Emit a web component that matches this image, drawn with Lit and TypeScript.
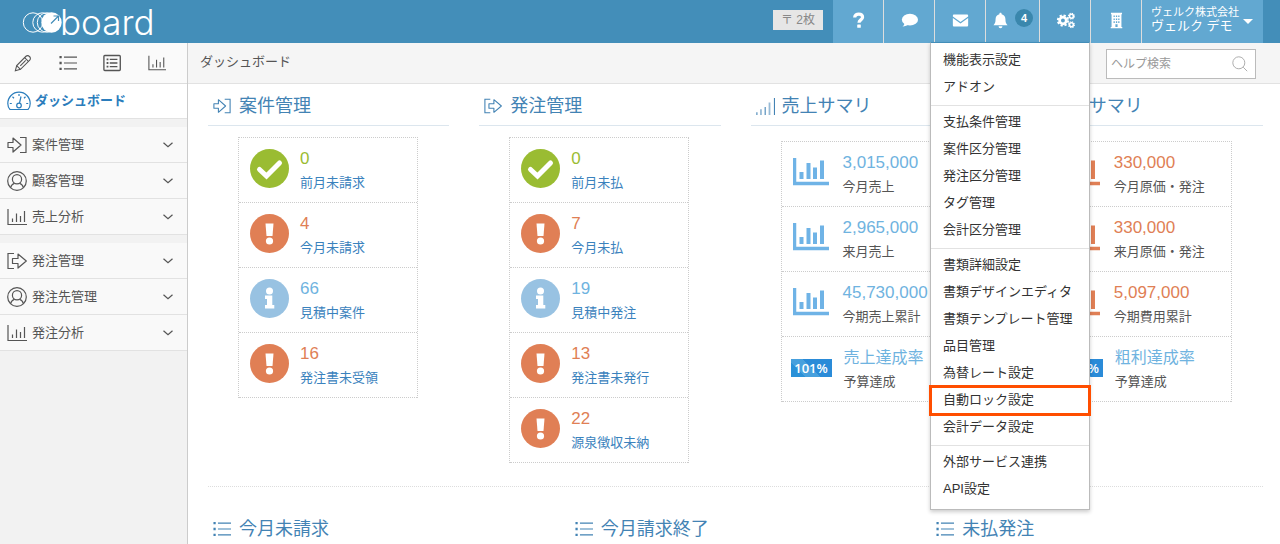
import { LitElement, html, css, svg, nothing } from "lit";
import { customElement, property } from "lit/decorators.js";
import { classMap } from "lit/directives/class-map.js";

const bars = svg`<path d="M1 2V17.5H20" /><path d="M5.5 11.500V15M9.500 6.500V15M13.500 9V15M17.500 4V15" />`;
const person = svg`<circle cx="10" cy="10" r="9.300" /><circle cx="10" cy="8.200" r="4.600" /><path d="M3.600 16.700C4 14.200 5.500 13 7.500 12.200M16.400 16.700C16 14.200 14.500 13 12.500 12.200" />`;

const lineIcons: Record<string, unknown> = {
  pencil: svg`<path d="M1.500 18.500L3 12.800L13.300 2.500C14.300 1.500 16 1.500 17.200 2.800C18.500 4 18.500 5.700 17.500 6.700L7.200 17Z" /><path d="M3 12.800L7.200 17M11.800 4L16 8.200" /><path d="M7 13.200L13 7.200" />`,
  list: svg`<path d="M5.500 3.500H20M5.500 10H20M5.500 16.500H20" /><path d="M0.500 3.500H3M0.500 10H3M0.500 16.500H3" stroke-width="2.600" />`,
  card: svg`<rect x="1" y="1.700" width="18.200" height="16.600" rx="1" stroke-width="1.500" /><path d="M7.500 6H16M7.500 10H16M7.500 14H16" stroke-width="1.500" /><path d="M4 6H6M4 10H6M4 14H6" stroke-width="2" />`,
  bars,
  person,
  enter: svg`<path d="M1 7.500H6V3L14 10L6 17V12.500H1Z" stroke-linejoin="round" /><path d="M13 2.500H19V17.500H13" />`,
  exit: svg`<path d="M5.500 7.500H11V3L19.300 10L11 17V12.500H5.500Z" stroke-linejoin="round" /><path d="M7 2.500H1V17.500H7" />`,
  rising: svg`<path d="M1 17V20M10.200 11V20M20.500 1V20" /><path d="M5.500 13.500V20M15 6V20" opacity="0.550" stroke-width="2" />`,
  down: svg`<path d="M1 5.500L10 13.500L19 5.500" stroke-width="2.400" />`,
  search: svg`<circle cx="8.500" cy="8.500" r="7.500" /><path d="M14 14L19 19" />`,
};

const solidIcons: Record<string, unknown> = {
  help: svg`<path d="M5.500 6.500C5.500 3.500 7.800 2.600 10.200 2.600C12.800 2.600 14.800 4 14.800 6.200C14.800 9.200 10.600 9.400 10.600 12.500" fill="none" stroke="currentColor" stroke-width="3.800" /><rect x="8.500" y="14.600" width="4.200" height="4" rx="0.600" />`,
  comment: svg`<ellipse cx="10.500" cy="9" rx="9.500" ry="7" /><path d="M4 12.500C4 15 3 16.300 1.600 17.200C5 17.200 7.500 16 8.500 14.500Z" />`,
  mail: svg`<path d="M1 4.500C1 3.500 1.600 3 2.500 3H17.500C18.400 3 19 3.500 19 4.500V5.300L10 11.800L1 5.300Z" /><path d="M1 7.200L10 13.600L19 7.200V15.500C19 16.500 18.400 17 17.500 17H2.500C1.600 17 1 16.500 1 15.500Z" />`,
  bell: svg`<path d="M10 1C11 1 11.300 1.600 11.300 2.500C14.300 3.200 15.800 5.500 15.800 8.500C15.800 12 16.500 13.700 18.300 15.700H1.700C3.500 13.700 4.200 12 4.200 8.500C4.200 5.500 5.700 3.200 8.700 2.500C8.700 1.600 9 1 10 1Z" /><path d="M7.800 16.800H12.200C12.200 18.300 11.300 19 10 19S7.800 18.300 7.800 16.800Z" />`,
  gears: svg`<circle cx="7" cy="10" r="3.900" fill="none" stroke="currentColor" stroke-width="3.200" /><circle cx="7" cy="10" r="6" fill="none" stroke="currentColor" stroke-width="2.400" stroke-dasharray="2.600 2.112" /><circle cx="17" cy="5" r="2.300" fill="none" stroke="currentColor" stroke-width="1.900" /><circle cx="17" cy="5" r="3.500" fill="none" stroke="currentColor" stroke-width="1.200" stroke-dasharray="1.500 1.249" /><circle cx="17" cy="15" r="2.300" fill="none" stroke="currentColor" stroke-width="1.900" /><circle cx="17" cy="15" r="3.500" fill="none" stroke="currentColor" stroke-width="1.200" stroke-dasharray="1.500 1.249" />`,
  building: svg`<path fill-rule="evenodd" d="M3.500 1H16.500V2.500H15.800V17.500H16.800V19H3.200V17.500H4.200V2.500H3.500ZM6.500 4V6H8V4ZM9.300 4V6H10.800V4ZM12 4V6H13.500V4ZM6.500 7.500V9.500H8V7.500ZM9.300 7.500V9.500H10.800V7.500ZM12 7.500V9.500H13.500V7.500ZM6.500 11V13H8V11ZM9.300 11V13H10.800V11ZM12 11V13H13.500V11ZM8.700 14.500V17.500H11.300V14.500Z" />`,
};

@customElement("line-icon")
class LineIcon extends LitElement {
  @property() name = "";
  static styles = css`
    :host { display: inline-flex; width: 20px; height: 20px; flex: none; }
    svg { width: 100%; height: 100%; overflow: visible; fill: none; stroke: currentColor; stroke-width: 1.2px; }
  `;
  render() {
    return html`<svg viewBox="0 0 20 20" aria-hidden="true">${lineIcons[this.name]}</svg>`;
  }
}

@customElement("solid-icon")
class SolidIcon extends LitElement {
  @property() name = "";
  static styles = css`
    :host { display: inline-flex; width: 17px; height: 17px; flex: none; }
    svg { width: 100%; height: 100%; overflow: visible; fill: currentColor; }
  `;
  render() {
    return html`<svg viewBox="0 0 20 20" aria-hidden="true">${solidIcons[this.name]}</svg>`;
  }
}

@customElement("status-icon")
class StatusIcon extends LitElement {
  @property() kind = "";
  static styles = css`
    :host { display: inline-flex; width: 39px; height: 39px; flex: none; }
    svg { width: 100%; height: 100%; }
    .ok { fill: #9abc32; }
    .warn { fill: #e07f55; }
    .info { fill: #98c2e2; }
    .sign { fill: #fff; }
    .tick { fill: none; stroke: #fff; stroke-width: 5; }
  `;
  render() {
    return html`<svg viewBox="0 0 39 39" aria-hidden="true">
      <circle class=${this.kind} cx="19.500" cy="19.500" r="19.500" />
      ${this.kind === "ok" ? svg`<path class="tick" stroke-linecap="round" d="M9.500 20.500L16.500 27L29.500 14" />` : nothing}
      ${this.kind === "warn" ? svg`<path class="sign" d="M15.500 9.500H23.500L22.500 22H16.500Z" /><circle class="sign" cx="19.500" cy="27" r="3.600" />` : nothing}
      ${this.kind === "info" ? svg`<circle class="sign" cx="19.500" cy="12" r="3.500" /><path class="sign" d="M15 16.500H22.300V26H24.300V29.500H15V26H17V20H15Z" />` : nothing}
    </svg>`;
  }
}

type Row = { value: string; label: string; kind: string };

@customElement("stat-list")
class StatList extends LitElement {
  @property({ attribute: false }) rows: Row[] = [];
  static styles = css`
    :host { display: block; }
    ul { list-style: none; margin: 0; padding: 0; width: 180px; box-sizing: border-box; border: 1px dotted #ccc; border-bottom: 0; }
    li { display: flex; height: 64px; border-bottom: 1px dotted #ccc; padding-left: 11px; white-space: nowrap; }
    .graphic { width: 39px; margin-right: 11px; padding-top: 11px; flex: none; }
    .text { display: flex; flex-direction: column; padding-top: 10px; }
    .value { font-size: 17px; line-height: 22px; }
    .label { font-size: 13px; line-height: 20px; margin-top: 3px; color: #3a82bd; text-decoration: none; }
    .plain .label { color: #555; }
    .ok .value { color: #9abc32; }
    .warn .value, .cost .value { color: #e07f55; }
    .info .value, .sales .value, .rate .value { color: #6fb3e0; }
    .rate .value { font-size: 16px; }
    .chart { width: 36px; height: 32px; margin-top: 4px; fill: none; stroke: #6fb3e6; stroke-width: 4; }
    .cost .chart { stroke: #e07f55; }
    .rate { padding-left: 9px; }
    .rate .graphic { width: 41px; margin-right: 12px; padding-top: 22px; }
    .badge { display: block; line-height: 18px; font-size: 13px; font-family: "Open Sans", sans-serif; font-weight: 600; text-align: center; color: #fff; background: linear-gradient(45deg, #2a91d8 25%, #47a0dd 25%, #47a0dd 50%, #2a8bd8 50%); }
  `;
  graphic(kind: string) {
    if (kind === "rate") return html`<span class="badge">101%</span>`;
    if (kind === "sales" || kind === "cost")
      return html`<svg class="chart" viewBox="0 0 36 32" aria-hidden="true"><path d="M1.500 1V26.500H36" stroke-width="3.500" /><path d="M8.500 15V22M15.500 6V22M22 10.500V22M29 3.500V22" /></svg>`;
    return html`<status-icon kind=${kind}></status-icon>`;
  }
  render() {
    return html`<ul>
      ${this.rows.map((r) => {
        const plain = ["sales", "cost", "rate"].includes(r.kind);
        return html`<li class=${classMap({ [r.kind]: true, plain })}>
          <div class="graphic">${this.graphic(r.kind)}</div>
          <div class="text">
            <span class="value">${r.value}</span>
            ${plain ? html`<span class="label">${r.label}</span>` : html`<a class="label" href="#">${r.label}</a>`}
          </div>
        </li>`;
      })}
    </ul>`;
  }
}

const row = (value: string, label: string, kind: string): Row => ({ value, label, kind });

const sections = [
  { title: "案件管理", icon: "enter", rows: [row("0", "前月未請求", "ok"), row("4", "今月未請求", "warn"), row("66", "見積中案件", "info"), row("16", "発注書未受領", "warn")] },
  { title: "発注管理", icon: "exit", rows: [row("0", "前月未払", "ok"), row("7", "今月未払", "warn"), row("19", "見積中発注", "info"), row("13", "発注書未発行", "warn"), row("22", "源泉徴収未納", "warn")] },
  { title: "売上サマリ", icon: "rising", summary: true, rows: [row("3,015,000", "今月売上", "sales"), row("2,965,000", "来月売上", "sales"), row("45,730,000", "今期売上累計", "sales"), row("売上達成率", "予算達成", "rate")] },
  { title: "費用サマリ", icon: "rising", summary: true, rows: [row("330,000", "今月原価・発注", "cost"), row("330,000", "来月原価・発注", "cost"), row("5,097,000", "今期費用累計", "cost"), row("粗利達成率", "予算達成", "rate")] },
];

const menu = [
  ["機能表示設定", "アドオン"],
  ["支払条件管理", "案件区分管理", "発注区分管理", "タグ管理", "会計区分管理"],
  ["書類詳細設定", "書類デザインエディタ", "書類テンプレート管理", "品目管理", "為替レート設定", "自動ロック設定", "会計データ設定"],
  ["外部サービス連携", "API設定"],
];

const sideGroups = [
  [["enter", "案件管理"], ["person", "顧客管理"], ["bars", "売上分析"]],
  [["exit", "発注管理"], ["person", "発注先管理"], ["bars", "発注分析"]],
];

@customElement("app-root")
class AppRoot extends LitElement {
  static styles = css`
    :host {
      display: flex; flex-direction: column; min-height: 100vh; background: #fff; color: #444;
      font-family: "Liberation Sans", "Noto Sans CJK JP", sans-serif; font-size: 13px; line-height: 20px;
    }
    * { box-sizing: border-box; }
    a { color: inherit; text-decoration: none; }
    button { font: inherit; color: inherit; background: none; border: 0; padding: 0; margin: 0; cursor: pointer; }
    ul { list-style: none; margin: 0; padding: 0; }

    .topbar { display: flex; height: 43px; background: #438eb9; color: #fff; padding-right: 17px; }
    .logo { display: flex; align-items: center; padding-left: 22px; height: 43px; margin-right: auto; }
    .logo svg { width: 40px; height: 43px; }
    .rings { fill: none; stroke: #fff; stroke-width: 1; }
    .disc { fill: #fff; }
    .needle { fill: none; stroke: #438eb9; stroke-width: 1.2; }
    .wordmark { font-family: Inter, sans-serif; font-weight: 300; font-size: 35px; line-height: 42px; margin-left: -2px; }
    .stamps { margin: 10px 10px 0 0; height: 20px; padding: 0 8px; background: #e6e6e6; color: #888; font-size: 12px; line-height: 20px; }
    .nav { display: flex; }
    .nav > li { position: relative; background: #62a8d1; border-right: 1px solid #ddd; width: 51px; }
    .nav > li.bell { width: 54px; }
    .nav > li.active { background: #579ec8; }
    .nav > li.user { width: 121px; border-right: 0; }
    .tool { display: flex; align-items: center; justify-content: center; width: 100%; height: 41px; }
    .bell .tool { gap: 6px; }
    .count { width: 18px; height: 18px; line-height: 18px; border-radius: 9px; background: #3a87ad; font-size: 11px; font-weight: bold; margin-bottom: 6px; }
    .account { display: flex; align-items: center; justify-content: space-between; width: 100%; height: 38px; padding: 0 10px 0 9px; text-align: left; white-space: nowrap; }
    .names { display: flex; flex-direction: column; }
    .company { font-size: 11px; line-height: 14px; }
    .person { font-size: 13px; line-height: 14px; }
    .caret { border: 5px solid transparent; border-top-color: #fff; border-bottom: 0; margin-top: 4px; }

    .dropdown { position: absolute; z-index: 5; top: 42px; right: 0; width: 160px; padding: 4px 0 6px; background: #fff; color: #333; border: 1px solid #bbb; border-top-color: #438eb9; box-shadow: 0 2px 4px rgba(0, 0, 0, 0.2); }
    .group + .group { border-top: 1px solid #e2e2e2; margin-top: 4px; padding-top: 3px; }
    .entry { display: block; height: 27px; line-height: 26px; padding-left: 12px; white-space: nowrap; }
    .entry.marked { outline: 3px solid #ff4e00; outline-offset: -1px; }

    .body { display: flex; flex: 1; }
    .sidebar { width: 188px; flex: none; background: #f2f2f2; border-right: 1px solid #ccc; }
    .shortcuts { display: flex; justify-content: space-between; align-items: center; height: 41px; padding: 0 21px 0 14px; background: #fafafa; border-bottom: 1px solid #ddd; color: #555; }
    .shortcuts button { display: flex; }
    .shortcuts line-icon { width: 18px; height: 18px; }
    .home { display: flex; align-items: center; gap: 4px; height: 35px; padding-left: 7px; background: #fff; border-bottom: 1px solid #e2e2e2; color: #2b7dbc; font-weight: bold; }
    .home svg { width: 24px; height: 20px; fill: none; stroke: currentColor; stroke-width: 1.2; }
    .side-group { margin-top: 8px; }
    .side-item { display: flex; align-items: center; width: 100%; height: 36px; gap: 5px; padding: 0 14px 0 7px; background: #f9f9f9; border-bottom: 1px solid #e2e2e2; color: #555; text-align: left; }
    .side-item .arrow { width: 10px; height: 10px; margin-left: auto; }

    .main { flex: 1; min-width: 0; }
    .crumbs { display: flex; align-items: center; justify-content: space-between; height: 41px; padding: 0 24px 0 12px; background: #f5f5f5; border-bottom: 1px solid #e2e2e2; color: #555; }
    .crumb { padding-bottom: 3px; }
    .search { display: flex; align-items: center; width: 150px; height: 30px; margin-top: 2px; padding: 0 7px 0 4px; background: #fff; border: 1px solid #bbb; color: #aaa; }
    .search input { flex: 1; min-width: 0; border: 0; outline: 0; padding: 0; background: none; font: inherit; font-size: 12px; color: #555; }
    .search input::placeholder { color: #999; opacity: 1; }
    .search line-icon { width: 16px; height: 16px; }

    .content { padding: 0 17px 0 20px; }
    .summary { display: grid; grid-template-columns: repeat(4, minmax(0, 1fr)); gap: 30px; padding-bottom: 23px; border-bottom: 1px dotted #ddd; }
    .title { display: flex; align-items: center; gap: 8px; margin: 0; padding-left: 5px; font-size: 18px; font-weight: normal; line-height: 24px; color: #4383b4; white-space: nowrap; }
    .title line-icon { width: 18px; height: 18px; }
    .summary .title { height: 42px; padding-top: 2px; border-bottom: 1px solid #dce6ee; }
    .stats { display: block; margin: 11px 0 0 30px; }
    .stats.lower { margin-top: 15px; }
    .lists { display: grid; grid-template-columns: repeat(3, minmax(0, 1fr)); gap: 30px; padding-top: 30px; }
  `;

  render() {
    return html`
      <header class="topbar">
        <a class="logo" href="#">
          <svg viewBox="0 0 40 43" aria-hidden="true">
            <g class="rings"><circle cx="11" cy="22.500" r="9.700" /><circle cx="20.500" cy="22.500" r="9.700" /><circle cx="25" cy="22.500" r="9.700" /></g>
            <circle class="disc" cx="29.500" cy="22.500" r="10.200" />
            <path class="needle" d="M29 23.500L36 16.500M31.500 16H36.500V21" />
          </svg>
          <span class="wordmark">board</span>
        </a>
        <span class="stamps">〒 2枚</span>
        <ul class="nav">
          <li><button class="tool" aria-label="ヘルプ"><solid-icon name="help"></solid-icon></button></li>
          <li><button class="tool" aria-label="コメント"><solid-icon name="comment"></solid-icon></button></li>
          <li><button class="tool" aria-label="メール"><solid-icon name="mail"></solid-icon></button></li>
          <li class="bell"><button class="tool" aria-label="通知"><solid-icon name="bell"></solid-icon><span class="count">4</span></button></li>
          <li class="active">
            <button class="tool" aria-label="設定" aria-expanded="true"><solid-icon name="gears"></solid-icon></button>
            <div class="dropdown">
              ${menu.map((group) => html`<div class="group">${group.map((item) => html`<a href="#" class=${classMap({ entry: true, marked: item === "自動ロック設定" })}>${item}</a>`)}</div>`)}
            </div>
          </li>
          <li><button class="tool" aria-label="会社"><solid-icon name="building"></solid-icon></button></li>
          <li class="user">
            <button class="account">
              <span class="names"><span class="company">ヴェルク株式会社</span><span class="person">ヴェルク デモ</span></span>
              <span class="caret"></span>
            </button>
          </li>
        </ul>
      </header>
      <div class="body">
        <nav class="sidebar">
          <div class="shortcuts">
            ${[["pencil", "作成"], ["list", "一覧"], ["card", "詳細"], ["bars", "分析"]].map(([icon, label]) => html`<button aria-label=${label}><line-icon name=${icon}></line-icon></button>`)}
          </div>
          <a class="home" href="#">
            <svg viewBox="0 0 24 20" aria-hidden="true">
              <path d="M3 18.500C1.500 17 0.800 14.800 0.800 12.500C0.800 6.200 5.800 1.200 12 1.200S23.200 6.200 23.200 12.500C23.200 14.800 22.500 17 21 18.500Z" />
              <circle cx="12" cy="14.500" r="2.300" />
              <path d="M12.500 12L14 5.500M12 3V5M5.500 5.800L7 7.200M18.500 5.800L17 7.200M2.800 12.500H4.800M19.200 12.500H21.200" />
            </svg>
            ダッシュボード
          </a>
          ${sideGroups.map((group) => html`<div class="side-group">
            ${group.map(([icon, label]) => html`<button class="side-item"><line-icon name=${icon}></line-icon><span>${label}</span><line-icon class="arrow" name="down"></line-icon></button>`)}
          </div>`)}
        </nav>
        <main class="main">
          <div class="crumbs">
            <span class="crumb">ダッシュボード</span>
            <label class="search"><input type="text" aria-label="ヘルプ検索" placeholder="ヘルプ検索" /><line-icon name="search"></line-icon></label>
          </div>
          <div class="content">
            <div class="summary">
              ${sections.map((s) => html`<section>
                <h2 class="title"><line-icon name=${s.icon}></line-icon>${s.title}</h2>
                <stat-list class=${classMap({ stats: true, lower: !!s.summary })} .rows=${s.rows}></stat-list>
              </section>`)}
            </div>
            <div class="lists">
              ${["今月未請求", "今月請求終了", "未払発注"].map((t) => html`<h2 class="title"><line-icon name="list"></line-icon>${t}</h2>`)}
            </div>
          </div>
        </main>
      </div>
    `;
  }
}
